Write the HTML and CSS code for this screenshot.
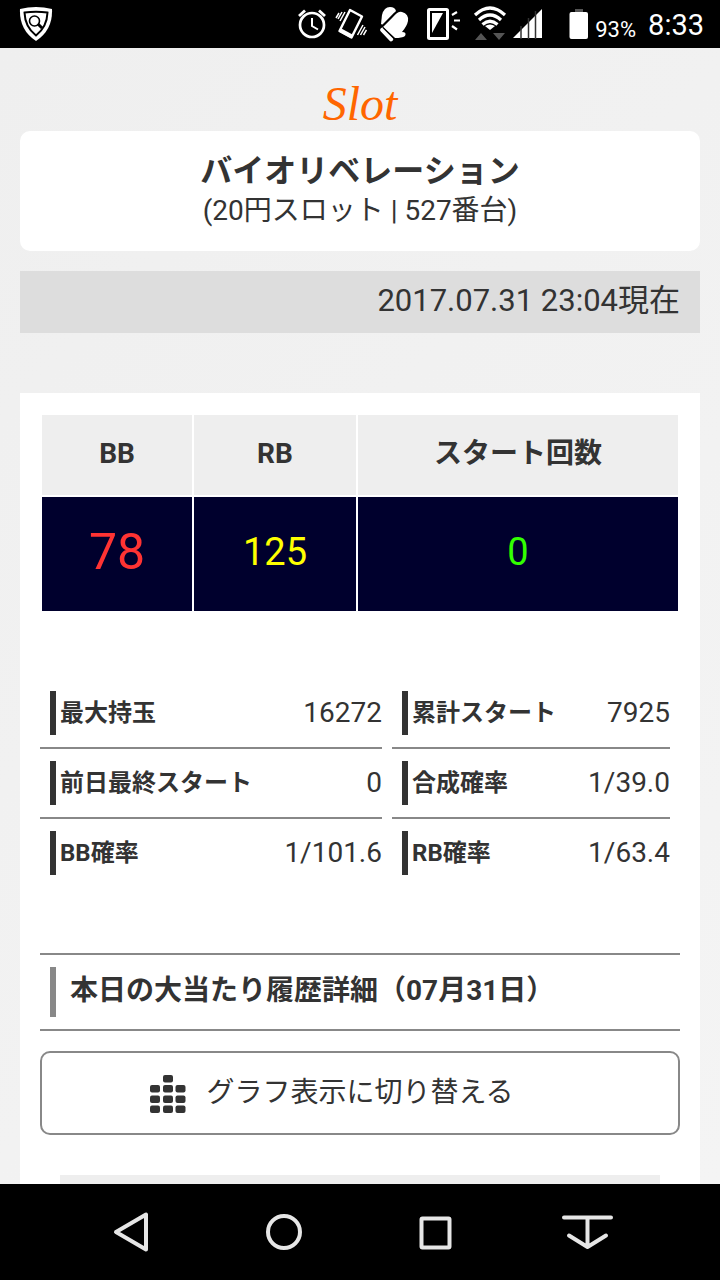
FILE: index.html
```html
<!DOCTYPE html>
<html lang="ja">
<head>
    <meta charset="UTF-8">
    <meta name="viewport" content="width=device-width, initial-scale=1.0">
    <title>Slot</title>
    <link rel="stylesheet" href="styles.css">
</head>
<body>
    <div class="statusbar">
        <svg class="shield" width="34" height="36" viewBox="0 0 34 36">
            <path d="M1 3Q17-1 33 3Q34 24 17 35Q0 24 1 3Z" fill="#fff"/>
            <path d="M5.500 6.500Q17 5 28.500 6.500Q28 21 17 29.500Q6 21 5.500 6.500Z" fill="#fff" stroke="#000" stroke-width="2"/>
            <circle cx="15.500" cy="15" r="5" fill="none" stroke="#000" stroke-width="1.600"/>
            <path d="M19 18l4 4" stroke="#000" stroke-width="3"/>
        </svg>
        <div class="icons">
            <svg width="30" height="36" viewBox="0 0 30 36" fill="none" stroke="#fff">
                <circle cx="15" cy="19" r="12" stroke-width="2.700"/>
                <path d="M15 12v8l6 3.500" stroke-width="2"/>
                <path d="M2 10l6-5.500M28 10l-6-5.500" stroke-width="2.800"/>
            </svg>
            <svg width="32" height="36" viewBox="0 0 32 36" fill="none" stroke="#fff">
                <path d="M15 4L27 10.500L16.500 31.500L4.500 25Z" stroke-width="2.400" stroke-linejoin="round"/>
                <path d="M5 24l12 6.500" stroke-width="4"/>
                <path d="M10 6L5 15M7 6L3 13M4 7L1 12M28 19L22.500 29M30 21l-4.500 8M31.500 24l-3 5" stroke-width="1.500"/>
            </svg>
            <svg class="mitten" width="30" height="36" viewBox="0 0 30 36">
                <path d="M2 18L3 9Q5 1 11 1Q16 1 17 5L4 19Z" fill="#fff"/>
                <path d="M4 21L14 11Q19 5 23 6Q30 8 29 15Q28 20 23 26Q28 26 26 30Q23 32 16 32Z" fill="#fff"/>
                <path d="M3.500 24l8.500 9" stroke="#fff" stroke-width="4.500" stroke-linecap="round"/>
                <path d="M4 21.500l12 12" stroke="#000" stroke-width="1.200"/>
                <path d="M3 20L16 7" stroke="#000" stroke-width="1.500"/>
            </svg>
            <svg class="screen" width="34" height="36" viewBox="0 0 34 36">
                <rect x="1.500" y="3.500" width="19" height="29" rx="1" fill="none" stroke="#fff" stroke-width="3"/>
                <path d="M5 7h11L5 27Z" fill="#fff"/>
                <path d="M25 9l5-3M27 14.500h6M25 20l5 3.500" stroke="#fff" stroke-width="2.200"/>
            </svg>
            <svg class="wifi" width="34" height="36" viewBox="0 0 34 36">
                <g fill="none" stroke="#fff" stroke-width="3.200">
                    <path d="M2 9Q17-5 32 9"/>
                    <path d="M6 14Q17 4 28 14"/>
                    <path d="M9.500 18.500Q17 12 24.500 18.500"/>
                </g>
                <path d="M12 20Q17 17 22 20L17 24Z" fill="#fff"/>
                <path d="M2 34l6-7 6 7ZM20 27h12l-6 7Z" fill="#555"/>
            </svg>
            <svg class="signal" width="30" height="36" viewBox="0 0 30 36">
                <path d="M0 32L29 3V32Z" fill="#fff"/>
                <path d="M8 20v13M15.500 12v21M22.500 5v28" stroke="#333" stroke-width="1.500"/>
            </svg>
            <svg class="battery" width="20" height="36" viewBox="0 0 20 36">
                <rect x="6" y="3" width="8" height="4" fill="#555"/>
                <rect x="0.500" y="6" width="18.500" height="27" rx="2" fill="#fff"/>
            </svg>
            <span class="percent">93%</span>
            <span class="clock">8:33</span>
        </div>
    </div>

    <div class="page">
        <h1 class="logo">Slot</h1>
        <div class="machine">
            <h2>バイオリベレーション</h2>
            <p>(20円スロット | 527番台)</p>
        </div>
        <p class="date">2017.07.31 23:04現在</p>

        <div class="card">
            <table class="counts">
                <tr>
                    <th class="bb">BB</th>
                    <th class="rb">RB</th>
                    <th>スタート回数</th>
                </tr>
                <tr>
                    <td class="red">78</td>
                    <td class="yellow">125</td>
                    <td class="green">0</td>
                </tr>
            </table>

            <dl class="stats">
                <div><dt>最大持玉</dt><dd>16272</dd></div>
                <div><dt>累計スタート</dt><dd>7925</dd></div>
                <div><dt>前日最終スタート</dt><dd>0</dd></div>
                <div><dt>合成確率</dt><dd>1/39.0</dd></div>
                <div><dt>BB確率</dt><dd>1/101.6</dd></div>
                <div><dt>RB確率</dt><dd>1/63.4</dd></div>
            </dl>

            <div class="history">
                <h3>本日の大当たり履歴詳細（07月31日）</h3>
            </div>

            <button class="graph">
                <svg width="36" height="42" viewBox="0 0 36 42" fill="#333">
                    <rect x="13" y="3" width="10" height="7.500" rx="2"/>
                    <rect x="0" y="13" width="10" height="7.500" rx="2"/>
                    <rect x="13" y="13" width="10" height="7.500" rx="2"/>
                    <rect x="25.500" y="13" width="10" height="7.500" rx="2"/>
                    <rect x="0" y="23.500" width="10" height="7.500" rx="2"/>
                    <rect x="13" y="23.500" width="10" height="7.500" rx="2"/>
                    <rect x="25.500" y="23.500" width="10" height="7.500" rx="2"/>
                    <rect x="0" y="33.500" width="10" height="7.500" rx="2"/>
                    <rect x="13" y="33.500" width="10" height="7.500" rx="2"/>
                    <rect x="25.500" y="33.500" width="10" height="7.500" rx="2"/>
                </svg>
                <span>グラフ表示に切り替える</span>
            </button>

            <div class="list"></div>
        </div>
    </div>

    <div class="navbar">
        <button aria-label="戻る">
            <svg width="54" height="48" viewBox="0 0 54 48"><path d="M11 24L41 6.500V41.500Z"/></svg>
        </button>
        <button aria-label="ホーム">
            <svg width="54" height="48" viewBox="0 0 54 48"><circle cx="27" cy="24" r="16"/></svg>
        </button>
        <button aria-label="履歴">
            <svg width="54" height="48" viewBox="0 0 54 48"><rect x="12.500" y="10.500" width="28" height="29" rx="1"/></svg>
        </button>
        <button aria-label="閉じる">
            <svg width="54" height="48" viewBox="0 0 54 48"><path d="M3 9.500H50M26.500 10V39M8 27.500L26.500 39L45 27.500"/></svg>
        </button>
    </div>
</body>
</html>
```
FILE: styles.css
```css
* {
    box-sizing: border-box;
}
body {
    margin: 0;
    height: 100vh;
    display: flex;
    flex-direction: column;
    font-family: Roboto, "Noto Sans CJK JP", sans-serif;
    font-size: 28px;
    line-height: 40px;
    color: #333;
    background: #000;
}
h1, h2, h3, p, dl, dd {
    margin: 0;
}
button {
    font: inherit;
    color: inherit;
    cursor: pointer;
}

.statusbar {
    flex: none;
    height: 48px;
    padding: 0 16px 0 19px;
    display: flex;
    justify-content: space-between;
    align-items: center;
    background: #000;
    color: #fff;
}
.icons {
    display: flex;
    align-items: center;
}
.icons svg {
    margin-right: 8px;
}
.icons .mitten {
    margin: 0 18px 0 4px;
}
.icons .screen {
    margin-right: 12px;
}
.icons .wifi {
    margin-right: 6px;
}
.icons .signal {
    margin-right: 26px;
}
.icons .battery {
    margin-right: 6px;
}
.percent {
    font-size: 22px;
    padding-top: 12px;
    margin-right: 12px;
}
.clock {
    font-size: 29px;
    padding-top: 2px;
}

.page {
    flex: 1;
    min-height: 0;
    overflow: hidden;
    padding: 0 20px;
    background: linear-gradient(135deg, #efefef, #f4f4f4);
}
.logo {
    padding-top: 28px;
    height: 83px;
    font-family: "Liberation Serif", serif;
    font-size: 48px;
    line-height: 55px;
    font-style: italic;
    font-weight: normal;
    text-align: center;
    color: #f60;
}
.machine {
    padding: 20px;
    background: #fff;
    border-radius: 10px;
    text-align: center;
}
.machine h2 {
    font-size: 32px;
}
.date {
    margin: 20px 0 60px;
    padding: 10px 20px 12px;
    font-size: 31px;
    text-align: right;
    background: #ddd;
}
.card {
    padding: 20px;
    background: #fff;
}

.counts {
    width: 100%;
    border-spacing: 2px;
    table-layout: fixed;
    text-align: center;
}
.counts th {
    height: 80px;
    padding: 0 0 2px;
    background: #eee;
}
.counts .bb {
    width: 150px;
}
.counts .rb {
    width: 162px;
}
.counts td {
    height: 114px;
    padding: 0 0 4px;
    font-size: 38px;
    background: #00002d;
}
.counts .red {
    font-size: 50px;
    color: #f33;
}
.counts .yellow {
    color: #ff0;
}
.counts .green {
    color: #3f0;
}

.stats {
    margin: 66px 0;
    padding-right: 10px;
    display: grid;
    grid-template-columns: 342fr 278fr;
    column-gap: 10px;
    line-height: 44px;
}
.stats div {
    display: flex;
    justify-content: space-between;
    padding: 12px 0 12px 10px;
    border-bottom: 2px solid #888;
}
.stats div:nth-last-child(-n+2) {
    border-bottom: 0;
}
.stats dt {
    height: 44px;
    padding-left: 4px;
    border-left: 6px solid #333;
    font-size: 24px;
    font-weight: bold;
}

.history {
    padding: 12px 10px;
    border-top: 2px solid #888;
    border-bottom: 2px solid #888;
}
.history h3 {
    padding: 4px 0 6px 14px;
    border-left: 6px solid #888;
    font-size: 28px;
}

.graph {
    width: 100%;
    height: 84px;
    margin: 20px 0 40px;
    padding: 0;
    display: grid;
    grid-template-columns: 1fr auto 1fr;
    column-gap: 20px;
    align-items: center;
    border: 2px solid #888;
    border-radius: 10px;
    background: #fff;
}
.graph svg {
    justify-self: end;
}
.list {
    height: 80px;
    margin: 0 20px;
    background: #eee;
}

.navbar {
    flex: none;
    height: 96px;
    padding: 0 56px;
    display: grid;
    grid-template-columns: repeat(4, 1fr);
    background: #000;
}
.navbar button {
    padding: 0;
    border: 0;
    background: none;
}
.navbar svg {
    display: block;
    margin: auto;
    fill: none;
    stroke: #e6e6e6;
    stroke-width: 4;
    stroke-linecap: round;
    stroke-linejoin: round;
}
```
